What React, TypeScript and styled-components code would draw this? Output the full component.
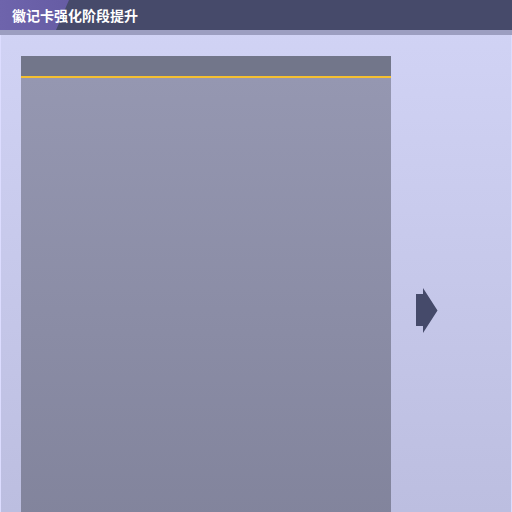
import React from "react";
import styled, { createGlobalStyle } from "styled-components";

const GlobalStyle = createGlobalStyle`
  html, body {
    margin: 0;
    padding: 0;
  }
  body {
    font-family: "Noto Sans CJK SC", "Noto Sans", sans-serif;
    background: #bcbee0;
  }
`;

const Page = styled.div`
  width: 512px;
  height: 512px;
  overflow: hidden;
  display: flex;
  flex-direction: column;
  background: linear-gradient(to bottom, #d2d4f6 0%, #bcbee0 100%);
  box-shadow: inset 1px 0 0 #dcdcff, inset -1px 0 0 #dcdcff;
`;

const TitleBar = styled.div`
  position: relative;
  height: 30px;
  flex-shrink: 0;
  display: flex;
  align-items: center;
  padding-left: 12px;
  background: #464a6a;

  /* purple wedge on the left, slanted edge */
  &::before {
    content: "";
    position: absolute;
    left: 0;
    top: 0;
    width: 69px;
    height: 100%;
    background: linear-gradient(to right, #6e64ac, #665ca4);
    clip-path: polygon(0 0, 69px 0, 56px 100%, 0 100%);
  }
`;

const TitleText = styled.span`
  position: relative;
  color: #ffffff;
  font-weight: 700;
  font-size: 14px;
  line-height: 1;
`;

const Stripe = styled.div`
  height: 5px;
  flex-shrink: 0;
  background: #9c9ec0;
`;

const Body = styled.div`
  display: flex;
  align-items: center;
  gap: 25px;
  padding: 21px 0 0 21px;
`;

const Panel = styled.div`
  width: 370px;
  height: 508px;
  flex-shrink: 0;
  display: flex;
  flex-direction: column;
`;

const PanelHeader = styled.div`
  height: 20px;
  background: #72768a;
  border-bottom: 2px solid #f5c030;
`;

const PanelBody = styled.div`
  flex: 1;
  background: linear-gradient(to bottom, #9597b1 0%, #80829a 100%);
`;

const Arrow = styled.svg`
  display: block;
  flex-shrink: 0;
`;

export default function App() {
  return (
    <>
      <GlobalStyle />
      <Page>
        <TitleBar>
          <TitleText>徽记卡强化阶段提升</TitleText>
        </TitleBar>
        <Stripe />
        <Body>
          <Panel>
            <PanelHeader />
            <PanelBody />
          </Panel>
          <Arrow width="22" height="45" viewBox="0 0 22 45">
            <path d="M0 6 H7 V0 L21.5 22.5 L7 45 V38 H0 Z" fill="#454a6a" />
          </Arrow>
        </Body>
      </Page>
    </>
  );
}
